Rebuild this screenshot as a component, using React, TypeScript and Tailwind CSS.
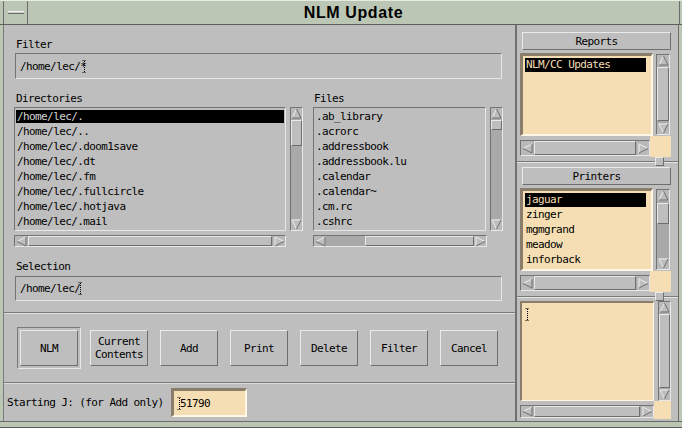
import React from "react";

const mono = "font-['DejaVu_Sans_Mono',monospace] text-[11px] tracking-[-0.6px] leading-[13px] text-black";
const sunken = "border border-t-[#737373] border-l-[#737373] border-b-[#e8e8e8] border-r-[#e8e8e8]";
const raised = "border border-t-[#eaeaea] border-l-[#eaeaea] border-b-[#6e6e6e] border-r-[#6e6e6e]";

type Dir = "up" | "down" | "left" | "right";

function Arrow({ dir }: { dir: Dir }) {
  const L = "#ececec";
  const D = "#6f6f6f";
  const F = "#bebebe";
  return (
    <svg width="11" height="11" viewBox="0 0 11 11" className="block shrink-0">
      {dir === "up" && (
        <>
          <polygon points="5.5,1 10,10 1,10" fill={F} />
          <line x1="5.5" y1="1" x2="1" y2="10" stroke={L} />
          <line x1="5.5" y1="1" x2="10" y2="10" stroke={D} />
          <line x1="1" y1="10" x2="10" y2="10" stroke={D} />
        </>
      )}
      {dir === "down" && (
        <>
          <polygon points="1,1 10,1 5.5,10" fill={F} />
          <line x1="1" y1="1" x2="10" y2="1" stroke={L} />
          <line x1="1" y1="1" x2="5.5" y2="10" stroke={L} />
          <line x1="10" y1="1" x2="5.5" y2="10" stroke={D} />
        </>
      )}
      {dir === "left" && (
        <>
          <polygon points="1,5.5 10,1 10,10" fill={F} />
          <line x1="1" y1="5.5" x2="10" y2="1" stroke={L} />
          <line x1="1" y1="5.5" x2="10" y2="10" stroke={D} />
          <line x1="10" y1="1" x2="10" y2="10" stroke={D} />
        </>
      )}
      {dir === "right" && (
        <>
          <polygon points="1,1 10,5.5 1,10" fill={F} />
          <line x1="1" y1="1" x2="1" y2="10" stroke={L} />
          <line x1="1" y1="1" x2="10" y2="5.5" stroke={L} />
          <line x1="1" y1="10" x2="10" y2="5.5" stroke={D} />
        </>
      )}
    </svg>
  );
}

function VScroll({ size, thumb }: { size: string; thumb: string }) {
  return (
    <div className={`flex flex-col w-[13px] bg-[#a9a9a9] ${sunken} ${size}`}>
      <div className="h-[11px] flex items-center justify-center bg-[#b9b9b9]">
        <Arrow dir="up" />
      </div>
      <div className="flex-1 flex flex-col">
        <div className={`bg-[#bebebe] ${raised} ${thumb}`} />
      </div>
      <div className="h-[11px] flex items-center justify-center bg-[#b9b9b9]">
        <Arrow dir="down" />
      </div>
    </div>
  );
}

function HScroll({ size, thumb }: { size: string; thumb: string }) {
  return (
    <div className={`flex w-full bg-[#a9a9a9] ${sunken} ${size}`}>
      <div className="w-[12px] flex items-center justify-center bg-[#b9b9b9]">
        <Arrow dir="left" />
      </div>
      <div className="flex-1 flex">
        <div className={`bg-[#bebebe] ${raised} ${thumb}`} />
      </div>
      <div className="w-[12px] flex items-center justify-center bg-[#b9b9b9]">
        <Arrow dir="right" />
      </div>
    </div>
  );
}

function Cursor({ cls }: { cls?: string }) {
  return (
    <svg width="5" height="13" viewBox="0 0 5 13" className={`inline-block align-middle ${cls ?? ""}`}>
      <line x1="2.5" y1="1" x2="2.5" y2="12" stroke="#000" strokeWidth="1" strokeDasharray="1 1" />
      <line x1="0.5" y1="0.5" x2="4.5" y2="0.5" stroke="#000" strokeDasharray="1 1" />
      <line x1="0.5" y1="12.5" x2="4.5" y2="12.5" stroke="#000" strokeDasharray="1 1" />
    </svg>
  );
}

function GrayList({ items, size, selected }: { items: string[]; size: string; selected: boolean }) {
  return (
    <div className={`bg-[#bebebe] ${sunken} ${size} pt-[2px] px-[1px] overflow-hidden`}>
      {items.map((t, i) => (
        <div key={i} className="h-[15px]">
          <div className={`h-[13px] pl-[1px] whitespace-nowrap ${selected && i === 0 ? "bg-black text-[#d4d4d4]" : ""}`}>{t}</div>
        </div>
      ))}
    </div>
  );
}

function TanScrolled({ items, vthumb }: { items: string[]; vthumb: string }) {
  return (
    <div className="ml-[3px] w-[151px] flex flex-col">
      <div className="flex">
        <div className="w-[133px] h-[83px] bg-[#f5deb3] border-t-[3px] border-l-[3px] border-t-[#8b7d6b] border-l-[#8b7d6b] border-b-[2px] border-r-[2px] border-b-[#fff6e6] border-r-[#fff6e6] pt-[2px] pl-[2px] pr-[5px] overflow-hidden">
          {items.map((t, i) => (
            <div key={i} className="h-[15px]">
              <div className={`h-[14px] pl-[1px] whitespace-nowrap leading-[14px] ${i === 0 ? "bg-black text-[#f5deb3]" : ""}`}>{t}</div>
            </div>
          ))}
        </div>
        <div className="ml-[3px] mt-[1px]">
          <VScroll size="h-[81px] w-[14px]" thumb={vthumb} />
        </div>
      </div>
      <div className="flex h-[21px]">
        <div className="w-[130px] pt-[4px]">
          <HScroll size="h-[16px]" thumb="ml-[1px] flex-1 mr-[1px]" />
        </div>
        <div className="w-[21px] bg-[#f5deb3]" />
      </div>
    </div>
  );
}

function SashRow() {
  return (
    <div className="h-[9px] flex items-center">
      <div className="w-[138px] h-[2px] border-t border-[#7a7a7a] border-b border-b-[#e4e4e4]" />
      <div className={`w-[9px] h-[9px] bg-[#bebebe] ${raised}`} />
      <div className="flex-1 h-[2px] border-t border-[#7a7a7a] border-b border-b-[#e4e4e4]" />
    </div>
  );
}

function Btn({ children }: { children: React.ReactNode }) {
  return (
    <div className={`w-[58px] h-[36px] flex flex-col items-center justify-center text-center bg-[#bebebe] ${raised}`}>
      {children}
    </div>
  );
}

export default function App() {
  const dirs = [
    "/home/lec/.",
    "/home/lec/..",
    "/home/lec/.doom1save",
    "/home/lec/.dt",
    "/home/lec/.fm",
    "/home/lec/.fullcircle",
    "/home/lec/.hotjava",
    "/home/lec/.mail",
  ];
  const files = [
    ".ab_library",
    ".acrorc",
    ".addressbook",
    ".addressbook.lu",
    ".calendar",
    ".calendar~",
    ".cm.rc",
    ".cshrc",
  ];
  return (
    <div className={`w-[682px] h-[428px] bg-[#bcc6b4] flex flex-col overflow-hidden ${mono}`}>
      {/* Title bar */}
      <div className="h-[25px] flex shrink-0 border-t border-t-[#e6ebe2] border-b border-b-[#5e5e5e]">
        <div className="w-[3px]" />
        <div className="w-[25px] border-l border-r border-[#6a6a6a] flex items-center justify-center">
          <div className="w-[16px] h-[3px] border-t border-t-[#f0f0f0] border-b border-b-[#6a6a6a] bg-[#c8d0c2]" />
        </div>
        <div className="flex-1 flex items-center justify-center font-['Liberation_Sans',Arial,sans-serif] font-bold text-[16px] tracking-[0.6px] text-black">
          NLM Update
        </div>
        <div className="w-[3px] border-l border-[#6a6a6a]" />
      </div>

      {/* Body */}
      <div className="flex-1 flex px-[3px] min-h-0">
        {/* Left pane */}
        <div className="w-[512px] flex flex-col bg-[#bebebe] border-l border-[#7a7a7a]">
          <div className="pl-[11px] pr-[12px] pt-[13px] flex flex-col">
            <div className="h-[13px] pl-[1px]">Filter</div>
            <div className={`mt-[2px] h-[26px] w-[487px] ${sunken} flex items-center pl-[4px] whitespace-nowrap`}>
              /home/lec/*<Cursor cls="-ml-[4px]" />
            </div>

            <div className="mt-[13px] flex -ml-[1px]">
              <div className="w-[289px] flex flex-col">
                <div className="h-[13px] pl-[2px]">Directories</div>
                <div className="mt-[2px] flex">
                  <GrayList items={dirs} size="w-[272px] h-[124px]" selected />
                  <div className="ml-[4px]">
                    <VScroll size="h-[124px]" thumb="mt-[1px] h-[26px]" />
                  </div>
                </div>
                <div className="mt-[4px] w-[272px]">
                  <HScroll size="h-[12px]" thumb="ml-[1px] flex-1 mr-[1px]" />
                </div>
              </div>
              <div className="ml-[10px] w-[190px] flex flex-col">
                <div className="h-[13px] pl-[1px]">Files</div>
                <div className="mt-[2px] flex">
                  <GrayList items={files} size="w-[174px] h-[124px]" selected={false} />
                  <div className="ml-[4px]">
                    <VScroll size="h-[124px] w-[12px]" thumb="mt-[1px] h-[10px]" />
                  </div>
                </div>
                <div className="mt-[4px] w-[174px]">
                  <HScroll size="h-[12px]" thumb="ml-[39px] flex-1" />
                </div>
              </div>
            </div>

            <div className="mt-[13px] h-[13px] pl-[1px]">Selection</div>
            <div className={`mt-[3px] h-[25px] w-[487px] ${sunken} flex items-center pl-[4px] whitespace-nowrap`}>
              /home/lec/<Cursor cls="-ml-[2px]" />
            </div>
          </div>

          <div className="mt-[11px] h-[2px] border-t border-t-[#7a7a7a] border-b border-b-[#dcdcdc]" />

          <div className="h-[68px] flex items-center pl-[13px]">
            <div className="w-[64px] h-[42px] border border-t-[#7a7a7a] border-l-[#7a7a7a] border-b-[#e8e8e8] border-r-[#e8e8e8] flex items-center justify-center mr-[9px]">
              <Btn>NLM</Btn>
            </div>
            <div className="flex gap-[12px]">
              <Btn>
                <span>Current</span>
                <span>Contents</span>
              </Btn>
              <Btn>Add</Btn>
              <Btn>Print</Btn>
              <Btn>Delete</Btn>
              <Btn>Filter</Btn>
              <Btn>Cancel</Btn>
            </div>
          </div>

          <div className="h-[2px] border-t border-t-[#7a7a7a] border-b border-b-[#dcdcdc]" />

          <div className="flex-1 flex items-center pl-[3px]">
            <div className="w-[164px] whitespace-nowrap">Starting J: (for Add only)</div>
            <div className="w-[76px] h-[29px] bg-[#f5deb3] border-t-[3px] border-l-[3px] border-t-[#8b7d6b] border-l-[#8b7d6b] border-b-[2px] border-r-[2px] border-b-[#fff6e6] border-r-[#fff6e6] flex items-center pl-[3px] whitespace-nowrap">
              <Cursor cls="-mr-[2px]" />51790
            </div>
          </div>
        </div>

        {/* Right pane */}
        <div className="flex-1 flex flex-col bg-[#bebebe] border-l-2 border-[#707070] border-r border-r-[#6a6a6a] pt-[7px]">
          <div className={`ml-[5px] w-[149px] h-[18px] flex items-center justify-center ${raised}`}>Reports</div>
          <div className="mt-[3px]">
            <TanScrolled items={["NLM/CC Updates"]} vthumb="mt-[1px] h-[54px]" />
          </div>
          <SashRow />
          <div className={`mt-[1px] ml-[5px] w-[149px] h-[18px] flex items-center justify-center ${raised}`}>Printers</div>
          <div className="mt-[3px]">
            <TanScrolled items={["jaguar", "zinger", "mgmgrand", "meadow", "inforback"]} vthumb="mt-[2px] h-[21px]" />
          </div>
          <SashRow />
          <div className="ml-[3px] w-[151px] flex flex-col">
            <div className="flex">
              <div className="w-[134px] h-[100px] bg-[#f5deb3] border-t-2 border-l-2 border-t-[#8b7d6b] border-l-[#8b7d6b] border-b border-r border-b-[#fff6e6] border-r-[#fff6e6] pl-[3px] pt-[4px]">
                <Cursor />
              </div>
              <div className="ml-[4px]">
                <VScroll size="h-[100px]" thumb="mt-[1px] flex-1 mb-[1px]" />
              </div>
            </div>
            <div className="flex h-[18px]">
              <div className="w-[134px] pt-[4px]">
                <HScroll size="h-[13px]" thumb="ml-[1px] flex-1 mr-[1px]" />
              </div>
              <div className="w-[17px] bg-[#f5deb3]" />
            </div>
          </div>
        </div>
      </div>

      {/* Bottom frame */}
      <div className="h-[7px] shrink-0 border-t border-t-[#6a6a6a] border-b border-b-[#5a5a5a]" />
    </div>
  );
}
